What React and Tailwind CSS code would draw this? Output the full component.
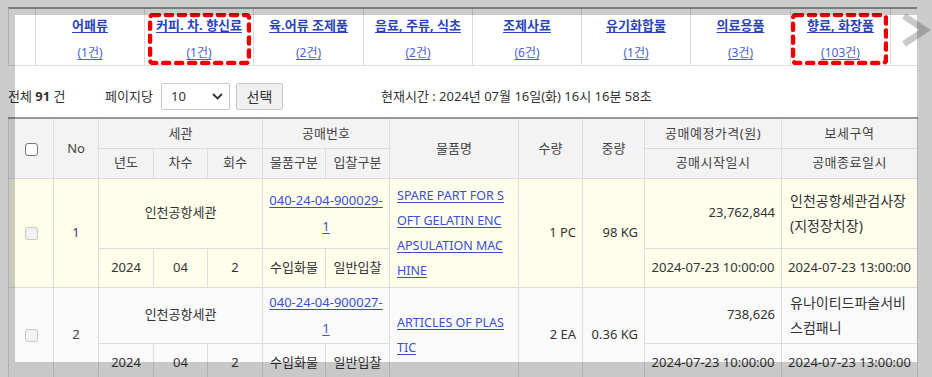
import React from 'react';

const cats = [
    { name: "어패류", cnt: "(1건)", w: "w-[109px]" },
    { name: "커피. 차. 향신료", cnt: "(1건)", w: "w-[109px]", mark: true },
    { name: "육.어류 조제품", cnt: "(2건)", w: "w-[110px]" },
    { name: "음료, 주류, 식초", cnt: "(2건)", w: "w-[109px]" },
    { name: "조제사료", cnt: "(6건)", w: "w-[109px]" },
    { name: "유기화합물", cnt: "(1건)", w: "w-[109px]" },
    { name: "의료용품", cnt: "(3건)", w: "w-[100px]" },
    { name: "향료, 화장품", cnt: "(103건)", w: "w-[100px]", mark: true },
];

const rows = [
    {
        no: "1", noCls: "text-[#5b2c6f]", bg: "bg-[#fefeeb]", h1: "h-[70px]",
        num: ["040-24-04-900029-", "1"],
        item: ["SPARE PART FOR S", "OFT GELATIN ENC", "APSULATION MAC", "HINE"],
        qty: "1 PC", wt: "98 KG", price: "23,762,844",
        zone: ["인천공항세관검사장", "(지정장치장)"],
    },
    {
        no: "2", noCls: "text-[#444]", bg: "bg-[#fafafa]", h1: "h-[56px]",
        num: ["040-24-04-900027-", "1"],
        item: ["ARTICLES OF PLAS", "TIC"],
        qty: "2 EA", wt: "0.36 KG", price: "738,626",
        zone: ["유나이티드파슬서비", "스컴패니"],
    },
];

function DashBox({ className }) {
    return (
        <svg className={`absolute ${className}`} width="100%" height="100%" preserveAspectRatio="none">
            <rect x="2" y="2" width="calc(100% - 4px)" height="calc(100% - 4px)" rx="3" fill="none"
                stroke="#ee0000" strokeWidth="4.5" strokeDasharray="6 7" strokeLinecap="round" />
        </svg>
    );
}

export default function App() {
    const td = "border border-[#dcdcdc] px-[6px]";
    return (
        <div className="relative w-[932px] h-[377px] overflow-hidden bg-white text-[13px] text-[#333] font-['Noto_Sans','Noto_Sans_CJK_KR',sans-serif]">
            <div className="pl-[8px] pt-[7px] w-[917px]">
                {/* category strip */}
                <div className="flex h-[59px] border-t-2 border-b border-l border-[#dcdcdc] border-t-[#999]">
                    <div className="w-[27px] border-r border-[#dcdcdc]"></div>
                    {cats.map((c, i) => (
                        <div key={i} className={`relative ${c.w} shrink-0 border-r border-[#dcdcdc] flex flex-col items-center`}>
                            <a className="mt-[6px] leading-[20px] font-bold text-[#2b45b8] underline underline-offset-2 whitespace-nowrap">{c.name}</a>
                            <a className="mt-[9px] leading-[18px] text-[12px] text-[#4a62d0] underline underline-offset-2">{c.cnt}</a>
                            {c.mark && (
                                <div className={`absolute top-[4px] bottom-[0px] ${i === 1 ? 'left-[3px] right-[2px]' : 'left-[0px] right-[2px]'}`}>
                                    <DashBox className="inset-0" />
                                </div>
                            )}
                        </div>
                    ))}
                    <div className="flex-1 relative">
                        <svg className="absolute left-[9px] top-[4px]" width="32" height="34" viewBox="0 0 32 34">
                            <path d="M4 3 L25 17 L4 31" fill="none" stroke="#c8c8c8" strokeWidth="6.5" strokeLinejoin="miter" />
                        </svg>
                    </div>
                </div>

                {/* toolbar */}
                <div className="flex items-center h-[51px] pt-[10px] text-[13px]">
                    <span className="w-[97px]">전체 <b>91</b> 건</span>
                    <span className="w-[56px]">페이지당</span>
                    <div className="w-[69px] h-[27px] border border-[#c8c8c8] rounded-[2px] flex items-center justify-between pl-[9px] pr-[6px] bg-white">
                        <span>10</span>
                        <svg width="11" height="7" viewBox="0 0 11 7">
                            <path d="M1 1 L5.5 5.5 L10 1" fill="none" stroke="#333" strokeWidth="1.8" />
                        </svg>
                    </div>
                    <button className="ml-[6px] w-[47px] h-[27px] border border-[#c8c8c8] rounded-[2px] bg-[#f0f0f0] text-[14px] text-[#333]">선택</button>
                    <span className="ml-[98px]">현재시간 : 2024년 07월 16일(화) 16시 16분 58초</span>
                </div>

                {/* list table */}
                <table className="table-fixed w-[909px] border-collapse border-t-2 border-t-[#999] text-center">
                    <colgroup>
                        {[45, 45, 55, 54, 55, 63, 64, 129, 64, 62, 137, 136].map((w, i) => (
                            <col key={i} style={{ width: w }} />
                        ))}
                    </colgroup>
                    <thead className="bg-[#f3f3f3] text-[#444]">
                        <tr className="h-[30px]">
                            <th rowSpan={2} className={`${td} font-normal`}>
                                <span className="inline-block align-middle w-[13px] h-[13px] border border-[#767676] rounded-[3px] bg-white"></span>
                            </th>
                            <th rowSpan={2} className={`${td} font-normal`}>No</th>
                            <th colSpan={3} className={`${td} font-normal`}>세관</th>
                            <th colSpan={2} className={`${td} font-normal`}>공매번호</th>
                            <th rowSpan={2} className={`${td} font-normal`}>물품명</th>
                            <th rowSpan={2} className={`${td} font-normal`}>수량</th>
                            <th rowSpan={2} className={`${td} font-normal`}>중량</th>
                            <th className={`${td} font-normal tracking-[0.5px]`}>공매예정가격(원)</th>
                            <th className={`${td} font-normal tracking-[0.5px]`}>보세구역</th>
                        </tr>
                        <tr className="h-[30px]">
                            {["년도", "차수", "회수"].map(t => (
                                <th key={t} className={`${td} font-normal`}>{t}</th>
                            ))}
                            <th className={`${td} font-normal px-0`}>물품구분</th>
                            <th className={`${td} font-normal px-0`}>입찰구분</th>
                            <th className={`${td} font-normal tracking-[0.5px]`}>공매시작일시</th>
                            <th className={`${td} font-normal tracking-[0.5px]`}>공매종료일시</th>
                        </tr>
                    </thead>
                    <tbody>
                        {rows.map((r, i) => (
                            <React.Fragment key={i}>
                                <tr className={`${r.bg} ${r.h1}`}>
                                    <td rowSpan={2} className={td}>
                                        <span className="inline-block align-middle w-[13px] h-[13px] border border-[#c8c8c8] rounded-[3px] bg-[#f2f2f2]"></span>
                                    </td>
                                    <td rowSpan={2} className={`${td} ${r.noCls}`}>{r.no}</td>
                                    <td colSpan={3} className={td}>인천공항세관</td>
                                    <td colSpan={2} className={`${td} leading-[26px]`}>
                                        <a className="text-[#3a4fcf] underline underline-offset-2">{r.num[0]}<br />{r.num[1]}</a>
                                    </td>
                                    <td rowSpan={2} className={`${td} text-left px-[7px] leading-[25px] text-[12.5px]`}>
                                        <a className="text-[#3a4fcf] underline underline-offset-2">
                                            {r.item.map((l, k) => (
                                                <React.Fragment key={k}>{l}{k < r.item.length - 1 && <br />}</React.Fragment>
                                            ))}
                                        </a>
                                    </td>
                                    <td rowSpan={2} className={`${td} text-right`}>{r.qty}</td>
                                    <td rowSpan={2} className={`${td} text-right`}>{r.wt}</td>
                                    <td className={`${td} text-right`}>{r.price}</td>
                                    <td className={`${td} text-left px-[8px] leading-[25px] text-[14px]`}>{r.zone[0]}<br />{r.zone[1]}</td>
                                </tr>
                                <tr className={`${r.bg} h-[39px]`}>
                                    <td className={td}>2024</td>
                                    <td className={td}>04</td>
                                    <td className={td}>2</td>
                                    <td className={`${td} px-0`}>수입화물</td>
                                    <td className={`${td} px-0`}>일반입찰</td>
                                    <td className={`${td} px-0`}>2024-07-23 10:00:00</td>
                                    <td className={`${td} px-0`}>2024-07-23 13:00:00</td>
                                </tr>
                            </React.Fragment>
                        ))}
                    </tbody>
                </table>
            </div>

            {/* dim frame over the capture */}
            <div className="absolute left-0 top-0 w-[932px] h-[15px] bg-black/20"></div>
            <div className="absolute left-0 top-[362px] w-[932px] h-[15px] bg-black/20"></div>
            <div className="absolute left-0 top-[15px] w-[15px] h-[347px] bg-black/20"></div>
            <div className="absolute left-[917px] top-[15px] w-[15px] h-[347px] bg-black/20"></div>
        </div>
    );
}
